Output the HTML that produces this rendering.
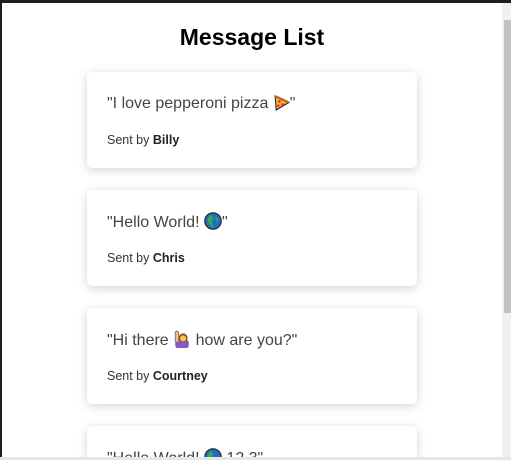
<!DOCTYPE html>
<html><head><meta charset="utf-8"><style>
html,body{margin:0;padding:0;width:511px;height:460px;overflow:hidden;}
#w{width:511px;height:460px;overflow:hidden;position:relative;background:#fff;font-family:"Liberation Sans",Arial,sans-serif;}
.top{position:absolute;left:0;top:0;width:511px;height:3px;background:#1e1e1e;}
.left{position:absolute;left:0;top:0;width:2px;height:460px;background:#1e1e1e;}
.sb{position:absolute;left:502px;top:3px;width:9px;height:454px;background:#f1f1f1;}
.thumb{position:absolute;left:504px;top:20px;width:7px;height:293px;background:#c1c1c1;}
.bot{position:absolute;left:0;top:457px;width:511px;height:3px;background:#e6e6e6;}
h1{position:absolute;left:0;width:504px;top:24px;margin:0;text-align:center;font-size:23px;font-weight:bold;color:#000;line-height:26px;}
.card{position:absolute;left:87px;width:330px;height:96px;background:#fff;border-radius:5px;box-shadow:0 2px 10px rgba(0,0,0,0.18);overflow:hidden;}
.msg{position:absolute;left:20px;top:22px;font-size:16px;color:#444;line-height:20px;white-space:nowrap;}
.by{position:absolute;left:20px;top:60px;font-size:12.5px;color:#333;line-height:16px;}
.by b{color:#222;}
svg{vertical-align:-3px;}
</style></head><body><div id="w">
<div class="top"></div><div class="left"></div>
<h1>Message List</h1>
<div class="card" style="top:72px"><div class="msg">"I love pepperoni pizza <svg width="17" height="17" viewBox="0 0 16 16"><path d="M2 2 L15 8 L3 15 Z" fill="#f5b53c" stroke="#222" stroke-width="1"/><path d="M2 2 L15 8" stroke="#b5651d" stroke-width="2"/><circle cx="6" cy="7" r="1.3" fill="#d33"/><circle cx="9" cy="10" r="1.3" fill="#d33"/><circle cx="5" cy="11" r="1.2" fill="#d33"/></svg>"</div><div class="by">Sent by <b>Billy</b></div></div>
<div class="card" style="top:190px"><div class="msg">"Hello World! <svg width="18" height="18" viewBox="0 0 16 16"><circle cx="8" cy="8" r="7.3" fill="#1e6fc4" stroke="#222" stroke-width="1"/><path d="M5 3 C8 3 9 6 7 8 C6 10 9 11 8 14 C5 12 4 9 3 7 Z M10 4 C12 5 13 7 12 9 C11 8 10 6 10 4Z" fill="#3aa845"/></svg>"</div><div class="by">Sent by <b>Chris</b></div></div>
<div class="card" style="top:308px"><div class="msg">"Hi there <svg width="18" height="18" viewBox="0 0 16 16"><rect x="2" y="9" width="12" height="7" rx="2" fill="#8a56c2"/><circle cx="9" cy="7" r="4" fill="#8b4f1e"/><circle cx="9" cy="7.5" r="2.7" fill="#f6c350"/><rect x="2" y="1" width="3" height="10" rx="1.5" fill="#f6c350" stroke="#8a56c2" stroke-width="0.8"/></svg> how are you?"</div><div class="by">Sent by <b>Courtney</b></div></div>
<div class="card" style="top:426px;height:31px;border-radius:5px 5px 0 0"><div class="msg">"Hello World! <svg width="18" height="18" viewBox="0 0 16 16"><circle cx="8" cy="8" r="7.3" fill="#1e6fc4" stroke="#222" stroke-width="1"/><path d="M5 3 C8 3 9 6 7 8 C6 10 9 11 8 14 C5 12 4 9 3 7 Z" fill="#3aa845"/></svg> 12.3"</div></div>
<div class="sb"></div><div class="thumb"></div><div class="bot"></div>
</div></body></html>
